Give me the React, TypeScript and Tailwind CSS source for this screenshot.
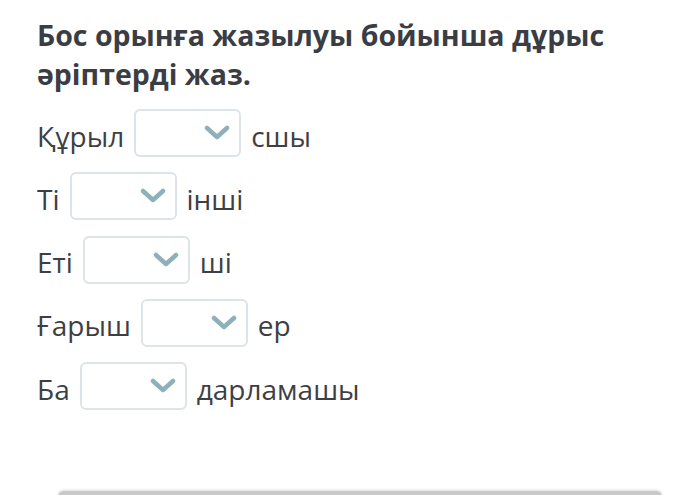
import React from 'react';

const rows: [string, string][] = [
  ['Құрыл', 'сшы'],
  ['Ті', 'інші'],
  ['Еті', 'ші'],
  ['Ғарыш', 'ер'],
  ['Ба', 'дарламашы'],
];

const Blank: React.FC = () => (
  <div className="w-[107px] h-[48px] rounded-[6px] border-2 border-[#dde3e6] bg-white flex items-center justify-end pr-[9px]">
    <svg width="26" height="16" viewBox="0 0 26 16" fill="none">
      <path d="M3 3 L13 12 L23 3" stroke="#8eb1b9" strokeWidth="4.5" strokeLinecap="round" strokeLinejoin="round" />
    </svg>
  </div>
);

export default function App() {
  return (
    <div className="w-[690px] h-[495px] bg-white overflow-hidden relative font-['Open_Sans',sans-serif]">
      <div className="pl-[37px] pt-[16px]">
        <h1 className="text-[28.5px] leading-[39px] font-bold text-[#3b3d44]">
          Бос орынға жазылуы бойынша дұрыс
          <br />
          әріптерді жаз.
        </h1>
        <div className="mt-[15px] flex flex-col gap-[15.3px] text-[28px] text-[#3e3f44]">
          {rows.map(([a, b]) => (
            <div key={a} className="flex items-center gap-[10px] h-[48px]">
              <span className="pt-[5px]">{a}</span>
              <Blank />
              <span className="pt-[5px]">{b}</span>
            </div>
          ))}
        </div>
      </div>
      <div className="absolute left-[58px] right-[28px] top-[491px] h-[10px] rounded-t-[6px] bg-[#c9c9c9] shadow-[0_-1px_3px_rgba(0,0,0,0.15)]" />
    </div>
  );
}
